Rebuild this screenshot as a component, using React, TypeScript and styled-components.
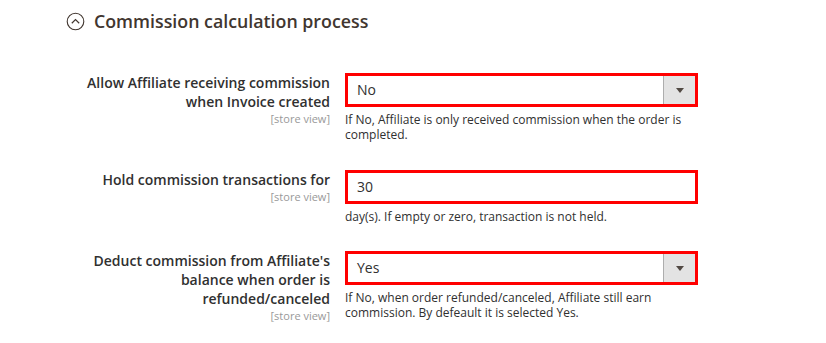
import React from "react";
import styled, { createGlobalStyle } from "styled-components";

const Global = createGlobalStyle`
  html, body { margin: 0; padding: 0; background: #fff; }
  body { font-family: "Open Sans", "Liberation Sans", sans-serif; color: #303030; }
`;

const Page = styled.div`
  width: 826px;
  height: 343px;
  overflow: hidden;
  background: #fff;
`;

const SectionHead = styled.div`
  display: flex;
  align-items: center;
  gap: 9px;
  padding: 11px 0 0 66px;
  height: 20px;
`;

const Title = styled.h2`
  margin: 0;
  font-size: 17.8px;
  font-weight: 600;
  color: #41362f;
  line-height: 20px;
`;

const Rows = styled.div`
  display: flex;
  flex-direction: column;
  padding-top: 42px;
`;

const Row = styled.div<{ $gap: number }>`
  display: grid;
  grid-template-columns: 330px 353px;
  column-gap: 15px;
  margin-bottom: ${(p) => p.$gap}px;
`;

const LabelCol = styled.div`
  text-align: right;
`;

const Label = styled.div`
  font-size: 14px;
  font-weight: 600;
  line-height: 19px;
  color: #303030;
`;

const Scope = styled.div`
  font-size: 11px;
  line-height: 15px;
  color: #999;
`;

const ControlCol = styled.div`
  display: flex;
  flex-direction: column;
`;

const Box = styled.div`
  box-sizing: border-box;
  height: 34px;
  border: 3px solid #f00;
  display: flex;
  align-items: stretch;
  background: #fff;
`;

const Value = styled.div`
  flex: 1;
  font-size: 14px;
  line-height: 28px;
  padding-left: 9px;
  color: #303030;
`;

const ArrowButton = styled.div`
  width: 31px;
  background: #e3e3e3;
  border-left: 1px solid #adadad;
  display: flex;
  align-items: center;
  justify-content: center;
`;

const Arrow = styled.div`
  width: 0;
  height: 0;
  border-left: 4px solid transparent;
  border-right: 4px solid transparent;
  border-top: 5px solid #514943;
`;

const Hint = styled.div`
  font-size: 12px;
  line-height: 15px;
  margin-top: 5px;
  color: #303030;
  padding-right: 10px;
`;

type Field = {
  label: string[];
  value: string;
  select: boolean;
  hint: string;
  gap: number;
};

const fields: Field[] = [
  {
    label: ["Allow Affiliate receiving commission", "when Invoice created"],
    value: "No",
    select: true,
    hint: "If No, Affiliate is only received commission when the order is completed.",
    gap: 28,
  },
  {
    label: ["Hold commission transactions for"],
    value: "30",
    select: false,
    hint: "day(s). If empty or zero, transaction is not held.",
    gap: 27,
  },
  {
    label: ["Deduct commission from Affiliate's", "balance when order is", "refunded/canceled"],
    value: "Yes",
    select: true,
    hint: "If No, when order refunded/canceled, Affiliate still earn commission. By defeault it is selected Yes.",
    gap: 0,
  },
];

const CollapseIcon = () => (
  <svg width="19" height="19" viewBox="0 0 19 19">
    <circle cx="9.5" cy="9.5" r="8.3" fill="none" stroke="#41362f" strokeWidth="1.1" />
    <path d="M5.8 11.2 L9.5 7.6 L13.2 11.2" fill="none" stroke="#41362f" strokeWidth="1.2" />
  </svg>
);

export default function App() {
  return (
    <Page>
      <Global />
      <SectionHead>
        <CollapseIcon />
        <Title>Commission calculation process</Title>
      </SectionHead>
      <Rows>
        {fields.map((f, i) => (
          <Row key={i} $gap={f.gap}>
            <LabelCol>
              <Label>
                {f.label.map((l, j) => (
                  <div key={j}>{l}</div>
                ))}
              </Label>
              <Scope>[store view]</Scope>
            </LabelCol>
            <ControlCol>
              <Box>
                <Value>{f.value}</Value>
                {f.select && (
                  <ArrowButton>
                    <Arrow />
                  </ArrowButton>
                )}
              </Box>
              <Hint>{f.hint}</Hint>
            </ControlCol>
          </Row>
        ))}
      </Rows>
    </Page>
  );
}
